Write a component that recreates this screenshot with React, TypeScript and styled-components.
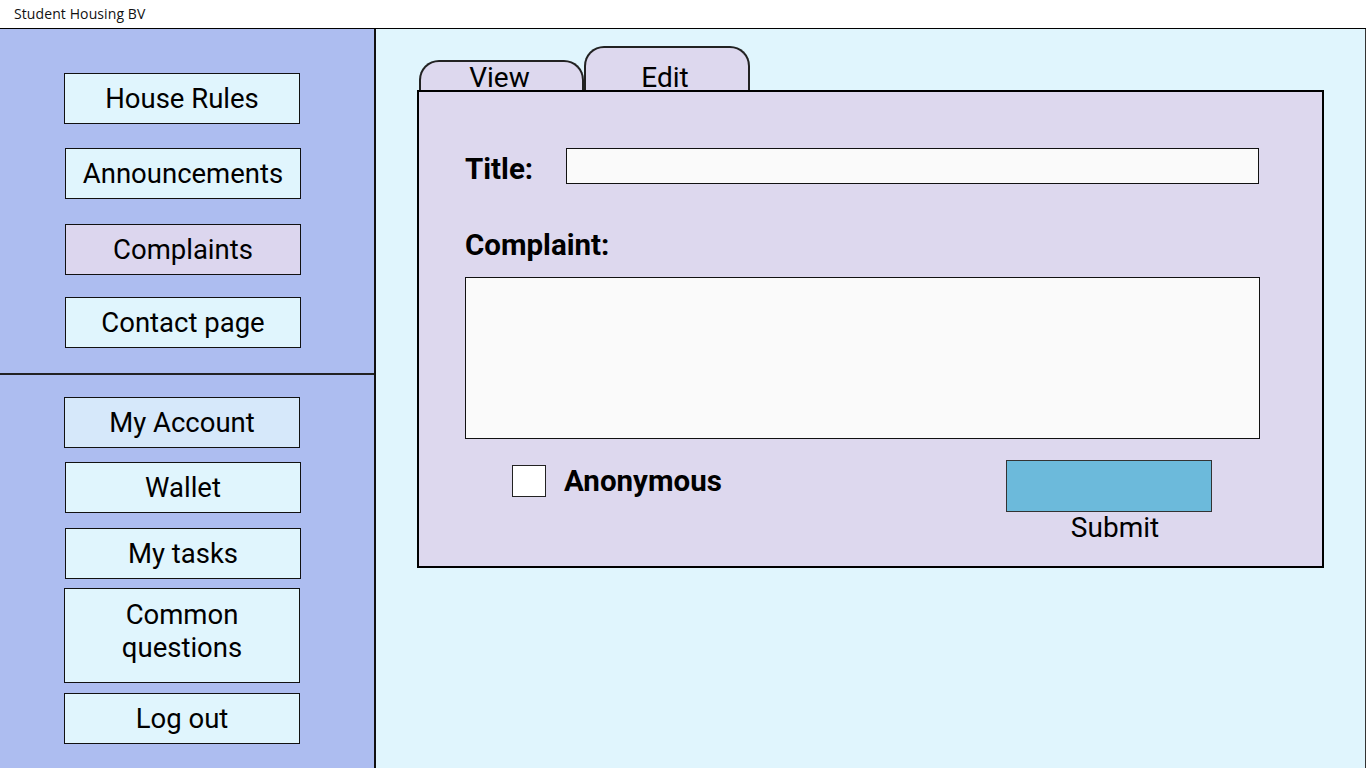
import React from "react";
import styled, { createGlobalStyle } from "styled-components";

const Global = createGlobalStyle`
  html, body { margin: 0; padding: 0; }
  body { font-family: Roboto, "Liberation Sans", sans-serif; color: #000; }
  * { box-sizing: border-box; }
`;

const Shell = styled.div`
  width: 1366px;
  height: 768px;
  display: flex;
  flex-direction: column;
  overflow: hidden;
  background: #fff;
`;

const TitleBar = styled.div`
  height: 29px;
  flex: 0 0 29px;
  padding-left: 14px;
  display: flex;
  align-items: center;
  padding-bottom: 1px;
  border-bottom: 1px solid #000;
  font-family: "Open Sans", "Noto Sans", sans-serif;
  font-size: 14px;
  letter-spacing: 0.1px;
  color: #111;
`;

const Main = styled.div`
  flex: 1;
  display: flex;
  min-height: 0;
`;

const Sidebar = styled.nav`
  width: 376px;
  flex: 0 0 376px;
  background: #adbdf0;
  border-right: 2px solid #111;
  display: flex;
  flex-direction: column;
`;

const NavGroup = styled.div<{ $top: boolean }>`
  display: flex;
  flex-direction: column;
  padding-left: 64px;
  ${(p) => (p.$top ? "height: 346px; border-bottom: 2px solid #222; padding-top: 44px;" : "padding-top: 22px;")}
`;

const NavButton = styled.button<{ $bg?: string; $mt?: number; $h?: number; $x?: number; $pb?: number }>`
  width: 236px;
  height: ${(p) => p.$h ?? 51}px;
  margin-top: ${(p) => p.$mt ?? 0}px;
  margin-left: ${(p) => p.$x ?? 0}px;
  background: ${(p) => p.$bg ?? "#e0f5fd"};
  border: 1px solid #111;
  font-family: Roboto, "Liberation Sans", sans-serif;
  font-size: 27.5px;
  line-height: 33px;
  color: #000;
  padding: 0 2px ${(p) => p.$pb ?? 0}px;
  text-align: center;
  cursor: pointer;
`;

const Content = styled.main`
  flex: 1;
  background: #e0f5fd;
  border-right: 1px solid #333;
  padding: 17px 0 0 41px;
`;

const Tabs = styled.div`
  display: flex;
  align-items: flex-end;
  margin-left: 2px;
  height: 44px;
`;

const Tab = styled.div<{ $h: number; $w: number }>`
  width: ${(p) => p.$w}px;
  height: ${(p) => p.$h}px;
  background: #ddd8ee;
  border: 2px solid #222;
  border-bottom: none;
  border-radius: 20px 20px 0 0;
  display: flex;
  align-items: flex-end;
  justify-content: center;
  font-size: 28px;
  line-height: 30px;
  overflow: hidden;
  padding-right: 4px;
  margin-bottom: -3px;
`;

const Panel = styled.section`
  width: 907px;
  height: 478px;
  background: #ddd8ee;
  border: 2px solid #000;
  padding: 56px 0 0 46px;
  display: flex;
  flex-direction: column;
  position: relative;
`;

const TitleRow = styled.div`
  display: flex;
  align-items: center;
  height: 36px;
`;

const Label = styled.label`
  font-weight: 700;
  font-size: 29.5px;
  line-height: 32px;
`;

const TitleLabel = styled(Label)`
  padding-top: 6px;
`;

const TitleInput = styled.div`
  margin-left: 33px;
  width: 693px;
  height: 36px;
  background: #fafafa;
  border: 1px solid #111;
`;

const ComplaintLabel = styled(Label)`
  margin-top: 45px;
`;

const TextArea = styled.div`
  margin-top: 16px;
  width: 795px;
  height: 162px;
  background: #fafafa;
  border: 1px solid #111;
`;

const BottomRow = styled.div`
  display: flex;
  align-items: flex-start;
  margin-top: 21px;
`;

const CheckGroup = styled.div`
  display: flex;
  align-items: center;
  margin-left: 47px;
  margin-top: 5px;
  gap: 18px;
`;

const CheckBox = styled.div`
  width: 34px;
  height: 32px;
  background: #fff;
  border: 1px solid #222;
`;

const CheckText = styled.span`
  font-weight: 700;
  font-size: 29.5px;
  line-height: 32px;
`;

const SubmitGroup = styled.div`
  margin-left: auto;
  margin-right: 110px;
  display: flex;
  flex-direction: column;
  align-items: center;
`;

const SubmitButton = styled.button`
  width: 206px;
  height: 52px;
  background: #6cbadb;
  border: 1px solid #333;
`;

const SubmitText = styled.span`
  font-size: 28px;
  line-height: 32px;
  margin-left: 12px;
`;

export default function App() {
  return (
    <>
      <Global />
      <Shell>
        <TitleBar>Student Housing BV</TitleBar>
        <Main>
          <Sidebar>
            <NavGroup $top>
              <NavButton $x={0}>House Rules</NavButton>
              <NavButton $mt={24} $x={1}>Announcements</NavButton>
              <NavButton $mt={25} $x={1} $bg="#dcd6ee">Complaints</NavButton>
              <NavButton $mt={22} $x={1}>Contact page</NavButton>
            </NavGroup>
            <NavGroup $top={false}>
              <NavButton $bg="#d6e8fa">My Account</NavButton>
              <NavButton $mt={14} $x={1}>Wallet</NavButton>
              <NavButton $mt={15} $x={1}>My tasks</NavButton>
              <NavButton $mt={9} $h={95} $pb={10}>
                Common
                <br />
                questions
              </NavButton>
              <NavButton $mt={10}>Log out</NavButton>
            </NavGroup>
          </Sidebar>
          <Content>
            <Tabs>
              <Tab $w={165} $h={33}>View</Tab>
              <Tab $w={166} $h={47}>Edit</Tab>
            </Tabs>
            <Panel>
              <TitleRow>
                <TitleLabel>Title:</TitleLabel>
                <TitleInput />
              </TitleRow>
              <ComplaintLabel>Complaint:</ComplaintLabel>
              <TextArea />
              <BottomRow>
                <CheckGroup>
                  <CheckBox />
                  <CheckText>Anonymous</CheckText>
                </CheckGroup>
                <SubmitGroup>
                  <SubmitButton />
                  <SubmitText>Submit</SubmitText>
                </SubmitGroup>
              </BottomRow>
            </Panel>
          </Content>
        </Main>
      </Shell>
    </>
  );
}
